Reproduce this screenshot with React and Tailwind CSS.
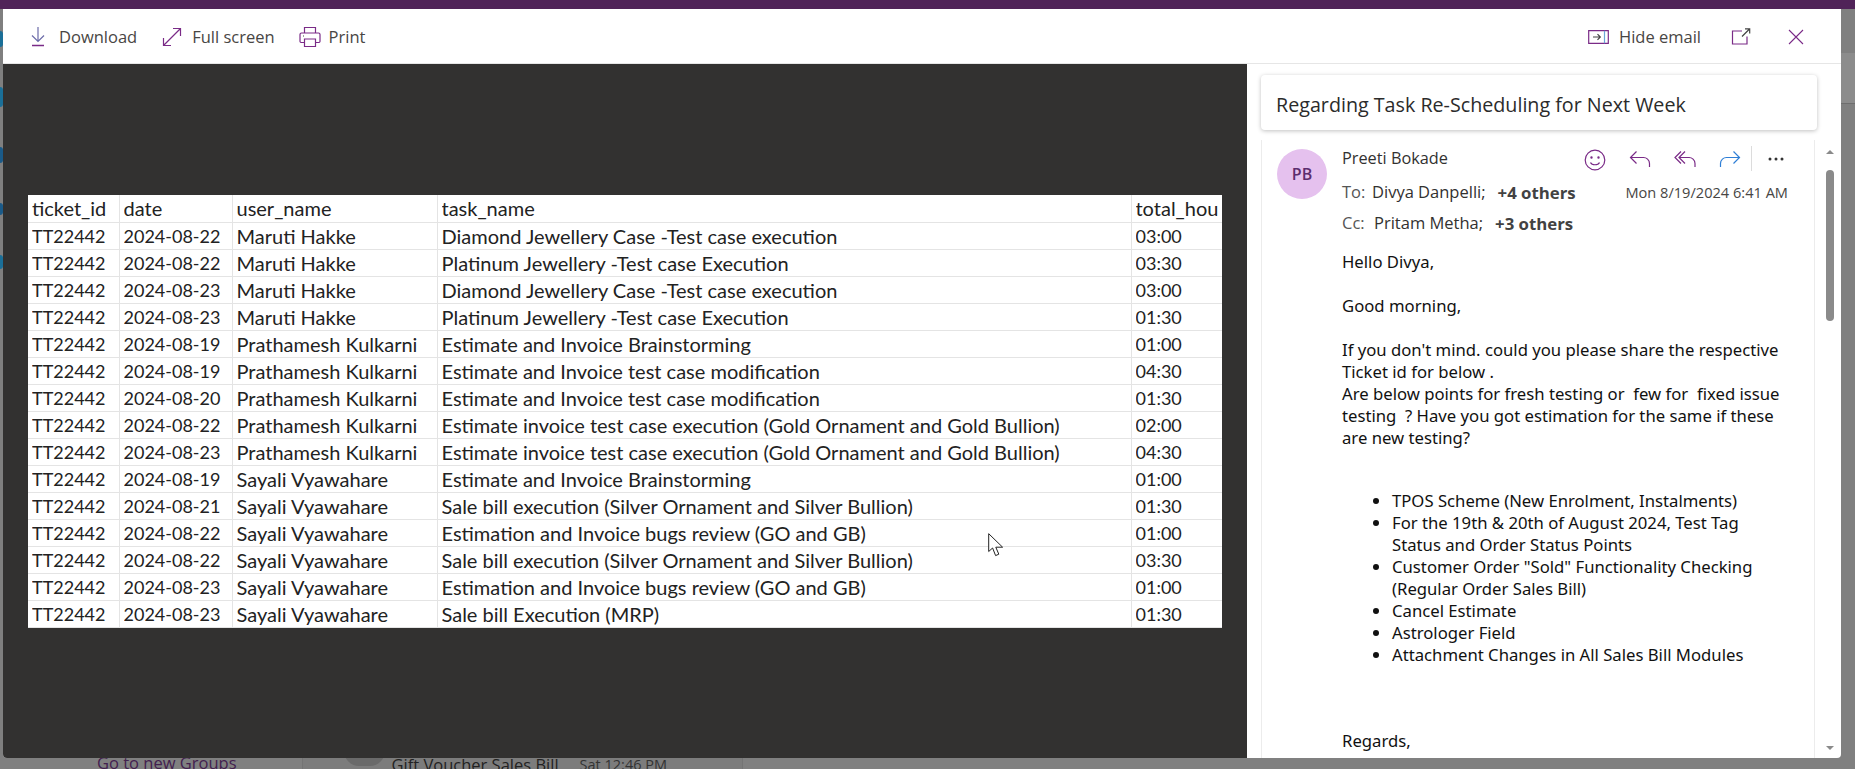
const rows = [
  ["TT22442", "2024-08-22", "Maruti Hakke", "Diamond Jewellery Case -Test case execution", "03:00"],
  ["TT22442", "2024-08-22", "Maruti Hakke", "Platinum Jewellery -Test case Execution", "03:30"],
  ["TT22442", "2024-08-23", "Maruti Hakke", "Diamond Jewellery Case -Test case execution", "03:00"],
  ["TT22442", "2024-08-23", "Maruti Hakke", "Platinum Jewellery -Test case Execution", "01:30"],
  ["TT22442", "2024-08-19", "Prathamesh Kulkarni", "Estimate and Invoice Brainstorming", "01:00"],
  ["TT22442", "2024-08-19", "Prathamesh Kulkarni", "Estimate and Invoice test case modification", "04:30"],
  ["TT22442", "2024-08-20", "Prathamesh Kulkarni", "Estimate and Invoice test case modification", "01:30"],
  ["TT22442", "2024-08-22", "Prathamesh Kulkarni", "Estimate invoice test case execution (Gold Ornament and Gold Bullion)", "02:00"],
  ["TT22442", "2024-08-23", "Prathamesh Kulkarni", "Estimate invoice test case execution (Gold Ornament and Gold Bullion)", "04:30"],
  ["TT22442", "2024-08-19", "Sayali Vyawahare", "Estimate and Invoice Brainstorming", "01:00"],
  ["TT22442", "2024-08-21", "Sayali Vyawahare", "Sale bill execution (Silver Ornament and Silver Bullion)", "01:30"],
  ["TT22442", "2024-08-22", "Sayali Vyawahare", "Estimation and Invoice bugs review (GO and GB)", "01:00"],
  ["TT22442", "2024-08-22", "Sayali Vyawahare", "Sale bill execution (Silver Ornament and Silver Bullion)", "03:30"],
  ["TT22442", "2024-08-23", "Sayali Vyawahare", "Estimation and Invoice bugs review (GO and GB)", "01:00"],
  ["TT22442", "2024-08-23", "Sayali Vyawahare", "Sale bill Execution (MRP)", "01:30"],
];
const headers = ["ticket_id", "date", "user_name", "task_name", "total_hou"];
const points = [
  "TPOS Scheme (New Enrolment, Instalments)",
  "For the 19th & 20th of August 2024, Test Tag Status and Order Status Points",
  'Customer Order "Sold" Functionality Checking (Regular Order Sales Bill)',
  "Cancel Estimate",
  "Astrologer Field",
  "Attachment Changes in All Sales Bill Modules",
];

const Icon = ({ w = 20, h = 20, color = "#7a2b87", children, className = "" }) => (
  <svg width={w} height={h} viewBox={`0 0 ${w} ${h}`} fill="none" stroke={color} strokeWidth="1.2" className={className}>
    {children}
  </svg>
);

const Cell = ({ children, last, numeric }) => (
  <td className={`h-[27px] p-0 pl-[4px] overflow-hidden whitespace-nowrap border-b border-[#e4e4e4] ${last ? "" : "border-r"}`}>
    <div className={`h-[26px] leading-[26px] overflow-hidden ${numeric ? "text-[18px]" : "text-[20px]"}`}>{children}</div>
  </td>
);

const ToolButton = ({ icon, label, className = "" }) => (
  <div className={`flex items-center ${className}`}>
    {icon}
    <span className="text-[16.5px] text-[#484644]">{label}</span>
  </div>
);

const App = () => {
  return (
    <div className="relative w-[1855px] h-[769px] overflow-hidden bg-[#7f7f7f] flex flex-col font-['Open_Sans',sans-serif]">
      {/* page behind the dialog */}
      <div className="h-[9px] shrink-0 bg-[#502358]"></div>
      <div className="flex-1 flex justify-between">
        <div className="w-[3px] flex flex-col gap-[40px] pt-[22px]">
          <div className="h-[16px] rounded-r bg-[#1a6f98]"></div>
          <div className="h-[20px] rounded-r bg-[#1a6f98]"></div>
          <div className="h-[16px] rounded-r bg-[#1a5a88]"></div>
          <div className="h-[12px] rounded-r bg-[#1a5a88]"></div>
          <div className="h-[14px] rounded-r bg-[#1a6f98]"></div>
        </div>
        <div className="w-[14px] bg-[#808080]">
          <div className="h-[51px] mt-[44px] bg-[#8c8c8c] border-b border-[#6e6e6e]"></div>
        </div>
      </div>
      <div className="h-[15px] shrink-0 -mt-[15px] flex items-start text-[16.5px] leading-[15px] whitespace-nowrap bg-[#808080] pl-[97px] pr-[14px]">
        <span className="mt-[1px] text-[#43214f]">Go to new Groups</span>
        <div className="ml-[65px] w-[441px] h-[15px] bg-[#7c7c7c] border-x border-[#747474] flex pl-[41px]">
          <div className="w-[41px] h-[30px] -mt-[18px] rounded-full bg-[#6a6a6a]"></div>
          <span className="ml-[7px] mt-[3px] text-[#222]">Gift Voucher Sales Bill</span>
          <span className="ml-[21px] mt-[3px] text-[14.5px] text-[#333]">Sat 12:46 PM</span>
        </div>
      </div>

      {/* dialog */}
      <div className="absolute left-[3px] top-[9px] w-[1838px] h-[749px] bg-white rounded-b flex flex-col overflow-hidden">
        <div className="h-[55px] shrink-0 pt-[2px] border-b border-[#e6e6e6] flex items-center">
          <ToolButton
            className="ml-[25px]"
            label="Download"
            icon={
              <Icon w={20} h={22} className="mr-[11px]">
                <path d="M10 1V15M4 9.5 10 15.5 16 9.5" stroke="#6a6aa8" />
                <path d="M4 19.5H16" strokeWidth="1.4" />
              </Icon>
            }
          />
          <ToolButton
            className="ml-[25px]"
            label="Full screen"
            icon={
              <Icon w={20} h={20} className="mr-[10px]">
                <path d="M1.5 18.5 18.5 1.5M11 1.5H18.5V9M1.5 11V18.5H9" />
              </Icon>
            }
          />
          <ToolButton
            className="ml-[24px]"
            label="Print"
            icon={
              <Icon w={22} h={22} className="mr-[8px]">
                <path d="M5.5 7V1.5H16.5V7M5.5 16.5H2A1.2 1.2 0 0 1 1 15.5V8.5A1.5 1.5 0 0 1 2.5 7H19.5A1.5 1.5 0 0 1 21 8.5V15.5A1.2 1.2 0 0 1 20 16.5H16.5" />
                <path d="M5.5 13H16.5V20.5H5.5Z" />
                <path d="M4 10H5" stroke="#444" />
              </Icon>
            }
          />
          <div className="flex-1"></div>
          <ToolButton
            label="Hide email"
            icon={
              <Icon w={21} h={14} className="mr-[10px]">
                <path d="M.7.7H20.3V13.3H.7Z" />
                <path d="M16.5.7V13.3" stroke="#6aa5d8" />
                <path d="M5 7H12M9.5 4.2 12.3 7 9.5 9.8" stroke="#444" />
              </Icon>
            }
          />
          <Icon w={20} h={20} className="ml-[30px]">
            <path d="M11 4H1.5V17H16V9.5" />
            <path d="M11 9.5 18.5 2M14 1.8H18.7V6.5" stroke="#444" />
          </Icon>
          <Icon w={16} h={16} className="ml-[37px] mr-[37px]">
            <path d="M1 1 15 15M15 1 1 15" strokeWidth="1.1" />
          </Icon>
        </div>

        <div className="flex-1 flex min-h-0">
          {/* attachment preview */}
          <div className="relative w-[1244px] shrink-0 bg-[#323130] pl-[25px] pt-[131px]">
            <table className="w-[1194px] table-fixed border-collapse bg-white text-[#222] font-['Lato',sans-serif]">
              <colgroup>
                <col className="w-[91px]" />
                <col className="w-[113px]" />
                <col className="w-[205px]" />
                <col className="w-[694px]" />
                <col className="w-[91px]" />
              </colgroup>
              <tbody>
                <tr>
                  {headers.map((h, i) => (
                    <Cell key={h} last={i === 4}>{h}</Cell>
                  ))}
                </tr>
                {rows.map((row, r) => (
                  <tr key={r}>
                    {row.map((c, i) => (
                      <Cell key={i} last={i === 4} numeric={i < 2 || i === 4}>{c}</Cell>
                    ))}
                  </tr>
                ))}
              </tbody>
            </table>
            {/* mouse pointer */}
            <svg width="16" height="25" viewBox="0 0 16 25" className="absolute left-[985px] top-[469px]">
              <path d="M.7.7V18.5L4.6 15 7.6 22.6 10.8 21.2 7.8 14.2H14.6Z" fill="#fff" stroke="#222" strokeWidth="1" />
            </svg>
          </div>

          {/* email pane */}
          <div className="flex-1 min-w-0 flex flex-col pl-[14px] pt-[11px]">
            <div className="w-[556px] h-[55px] shrink-0 rounded bg-white shadow-[0_1px_4px_rgba(0,0,0,0.25)] flex items-center pl-[15px] pt-[5px] text-[19.7px] font-medium text-[#2b2b2b]">
              Regarding Task Re-Scheduling for Next Week
            </div>
            <div className="flex-1 min-h-0 flex mt-[10px]">
              <div className="w-[554px] shrink-0 border-x border-[#ececec] overflow-hidden pl-[15px] pt-[9px] flex">
                <div className="w-[50px] h-[50px] shrink-0 rounded-full bg-[#e5c1ee] flex items-center justify-center text-[16px] font-semibold text-[#5c2d6e]">
                  PB
                </div>
                <div className="ml-[15px] flex-1 min-w-0 text-[14px] text-[#323130]">
                  <div className="h-[28px] flex items-start">
                    <span className="text-[16.3px] leading-[18px]">Preeti Bokade</span>
                    <div className="flex items-center ml-auto -mt-[3px]">
                      <Icon w={22} h={22} className="mt-[2px]">
                        <circle cx="11" cy="11" r="9.8" />
                        <circle cx="7.5" cy="8.5" r=".6" fill="#7a2b87" />
                        <circle cx="14.5" cy="8.5" r=".6" fill="#7a2b87" />
                        <path d="M6.5 13.5C8 16.5 14 16.5 15.5 13.5" />
                      </Icon>
                      <Icon w={22} h={20} className="ml-[23px]">
                        <path d="M7.5 2.5 1.5 8.5 7.5 14.5M1.5 8.5H14A6 6 0 0 1 20.5 14.5V18" />
                      </Icon>
                      <Icon w={22} h={20} className="ml-[23px]">
                        <path d="M7 2.5 1 8.5 7 14.5M11 2.5 5 8.5 11 14.5M5 8.5H14.5A6 6 0 0 1 21 14.5V18" />
                      </Icon>
                      <Icon w={22} h={20} color="#2f7fd6" className="ml-[23px]">
                        <path d="M14.5 2.5 20.5 8.5 14.5 14.5M20.5 8.5H8A6 6 0 0 0 1.5 14.5V18" />
                      </Icon>
                      <div className="w-px h-[25px] ml-[10px] bg-[#dcdcdc]"></div>
                      <svg width="16" height="4" viewBox="0 0 16 4" className="ml-[16px] mr-[30px]" fill="#333">
                        <circle cx="2" cy="2" r="1.5" />
                        <circle cx="8" cy="2" r="1.5" />
                        <circle cx="14" cy="2" r="1.5" />
                      </svg>
                    </div>
                  </div>
                  <div className="h-[31px] flex items-center text-[16.5px]">
                    <span className="text-[#555] w-[30px]">To:</span>
                    <span>Divya Danpelli;</span>
                    <span className="ml-[12px] text-[16.8px] font-bold text-[#424242]">+4 others</span>
                    <span className="ml-auto mr-[26px] text-[14.6px] text-[#484644]">Mon 8/19/2024 6:41 AM</span>
                  </div>
                  <div className="h-[31px] flex items-center text-[16.5px]">
                    <span className="text-[#555] w-[32px]">Cc:</span>
                    <span>Pritam Metha;</span>
                    <span className="ml-[12px] text-[16.8px] font-bold text-[#424242]">+3 others</span>
                  </div>
                  <div className="mt-[12px] w-[445px] text-[16.7px] leading-[22px] text-[#111] font-['Noto_Sans',sans-serif]">
                    <p>Hello Divya,</p>
                    <p className="mt-[22px]">Good morning,</p>
                    <p className="mt-[22px]">If you don't mind. could you please share the respective Ticket id for below .</p>
                    <p>Are below points for fresh testing or&nbsp; few for&nbsp; fixed issue testing&nbsp; ? Have you got estimation for the same if these are new testing?</p>
                    <ul className="mt-[41px] pl-[50px] pr-[22px] list-disc">
                      {points.map((p) => (
                        <li key={p}>{p}</li>
                      ))}
                    </ul>
                    <p className="mt-[64px]">Regards,</p>
                  </div>
                </div>
              </div>
              <div className="ml-[10px] w-[9px] flex flex-col items-center pt-[10px] pb-[8px]">
                <div className="w-0 h-0 border-x-[4px] border-x-transparent border-b-[4px] border-b-[#8a8a8a]"></div>
                <div className="w-[8px] h-[151px] mt-[16px] rounded-full bg-[#8a8a8a]"></div>
                <div className="flex-1"></div>
                <div className="w-0 h-0 border-x-[4px] border-x-transparent border-t-[4px] border-t-[#8a8a8a]"></div>
              </div>
            </div>
          </div>
        </div>
      </div>
    </div>
  );
};

export default App;
